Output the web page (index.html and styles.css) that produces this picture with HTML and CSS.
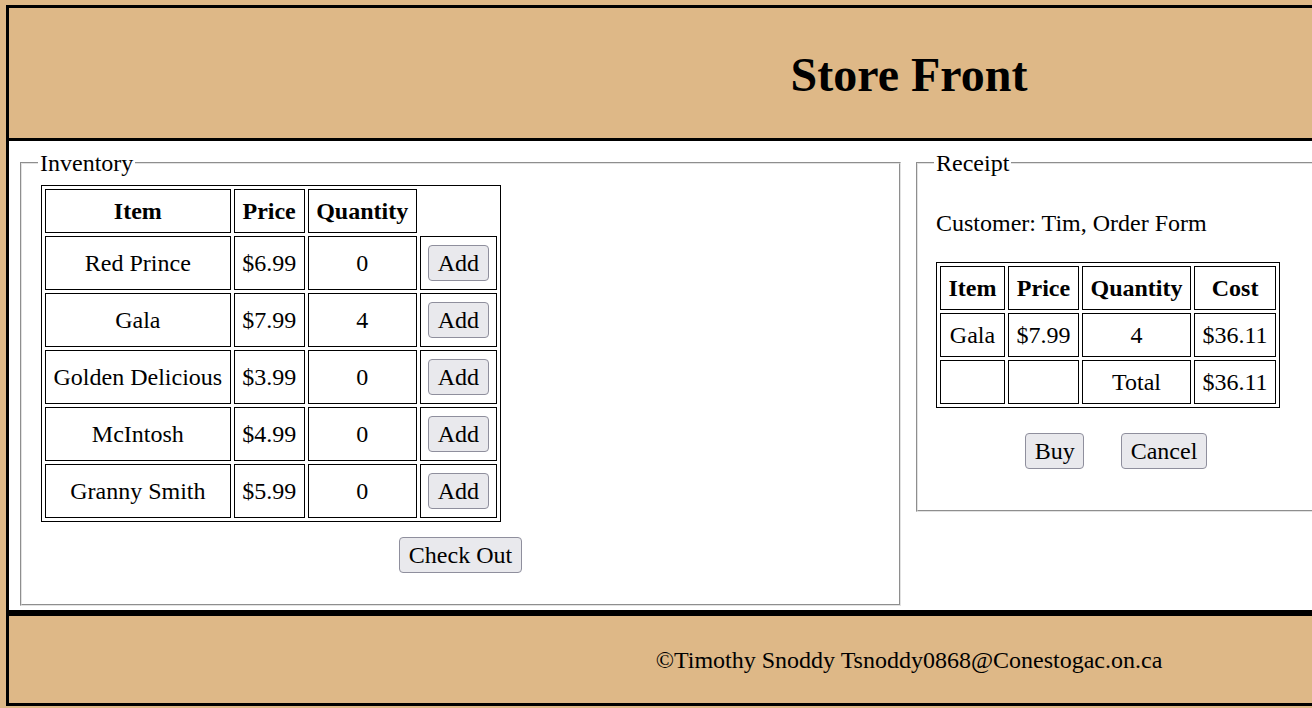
FILE: index.html
```html
<!DOCTYPE html>
<html lang="en">
<head>
<meta charset="utf-8">
<title>Store Front</title>
<link rel="stylesheet" href="styles.css">
</head>
<body>
<div class="page">
  <header class="site-header">
    <h1 class="title">Store Front</h1>
  </header>
  <main class="site-main">
    <fieldset class="panel inventory">
      <legend class="panel-legend">Inventory</legend>
      <table class="grid inv-table">
        <tr>
          <th class="c-item">Item</th>
          <th>Price</th>
          <th>Quantity</th>
        </tr>
        <tr><td>Red Prince</td><td>$6.99</td><td>0</td><td class="c-btn"><button class="btn">Add</button></td></tr>
        <tr><td>Gala</td><td>$7.99</td><td>4</td><td class="c-btn"><button class="btn">Add</button></td></tr>
        <tr><td>Golden Delicious</td><td>$3.99</td><td>0</td><td class="c-btn"><button class="btn">Add</button></td></tr>
        <tr><td>McIntosh</td><td>$4.99</td><td>0</td><td class="c-btn"><button class="btn">Add</button></td></tr>
        <tr><td>Granny Smith</td><td>$5.99</td><td>0</td><td class="c-btn"><button class="btn">Add</button></td></tr>
      </table>
      <div class="actions checkout"><button class="btn">Check Out</button></div>
    </fieldset>
    <fieldset class="panel receipt">
      <legend class="panel-legend">Receipt</legend>
      <p class="customer">Customer: Tim, Order Form</p>
      <table class="grid rec-table">
        <tr><th>Item</th><th>Price</th><th class="c-qty">Quantity</th><th class="c-cost">Cost</th></tr>
        <tr><td>Gala</td><td>$7.99</td><td>4</td><td>$36.11</td></tr>
        <tr><td></td><td></td><td>Total</td><td>$36.11</td></tr>
      </table>
      <div class="actions buy-row"><button class="btn">Buy</button><button class="btn">Cancel</button></div>
    </fieldset>
  </main>
  <footer class="site-footer">
    <p class="credit">©Timothy Snoddy Tsnoddy0868@Conestogac.on.ca</p>
  </footer>
</div>
</body>
</html>
```
FILE: styles.css
```css
html {
  overflow: hidden;
  background: #deb887;
}
body {
  margin: 5px 0 0 6px;
  font-family: "Liberation Serif", "Times New Roman", serif;
  font-size: 24px;
  color: #000;
  background: #deb887;
}
.page {
  width: 1806px;
}
.site-header {
  height: 130px;
  border: 3px solid #000;
  background: #deb887;
  display: flex;
  align-items: center;
  justify-content: center;
}
.title {
  margin: 4px 0 0 0;
  font-size: 48px;
  font-weight: bold;
  line-height: 1.15;
}
.site-main {
  background: #fff;
  border-left: 3px solid #000;
  border-right: 3px solid #000;
  border-bottom: 3px solid #000;
  display: flex;
  align-items: flex-start;
  gap: 15px;
  padding: 8px 0 4px 11px;
}
.panel {
  margin: 0;
  min-width: 0;
  border: 2px groove #e2e2e2;
  padding: 8px 18px 15px;
  box-sizing: border-box;
}
.inventory {
  width: 881px;
}
.receipt {
  width: 400px;
}
.panel-legend {
  padding: 0 2px;
  margin-left: -2px;
  line-height: 28px;
}
.grid {
  border: 1px solid #000;
  border-spacing: 3px;
}
.grid th,
.grid td {
  border: 1px solid #000;
  padding: 7px 7.5px;
  text-align: center;
  line-height: 28px;
  white-space: nowrap;
}
.grid .c-btn {
  padding: 8px 7.5px 8px;
}
.inv-table {
  margin-left: 1px;
}
.inv-table .c-item {
  width: 168px;
}
.btn {
  font-family: "Liberation Serif", "Times New Roman", serif;
  font-size: 24px;
  line-height: 28px;
  color: #000;
  background: #e9e9ed;
  border: 1px solid #8f8f9d;
  border-radius: 4px;
  padding: 3px 8.5px;
  margin: 0;
}
.actions {
  display: flex;
  justify-content: center;
}
.checkout {
  margin: 15px 0 16px;
}
.customer {
  margin: 24px 0 25px;
  line-height: 28px;
}
.rec-table {
  margin: 0;
}
.buy-row {
  margin: 25px 0 26px;
  gap: 37px;
}
.site-footer {
  height: 87px;
  border: 3px solid #000;
  background: #deb887;
  display: flex;
  align-items: center;
  justify-content: center;
}
.credit {
  margin: 0;
  line-height: 28px;
}
```
